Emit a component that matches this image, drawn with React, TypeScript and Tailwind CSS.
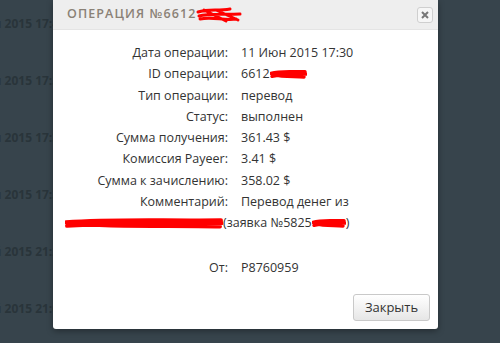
const rows: [string, string][] = [
  ["Дата операции:", "11 Июн 2015 17:30"],
  ["ID операции:", "6612"],
  ["Тип операции:", "перевод"],
  ["Статус:", "выполнен"],
  ["Сумма получения:", "361.43 $"],
  ["Комиссия Payeer:", "3.41 $"],
  ["Сумма к зачислению:", "358.02 $"],
  ["Комментарий:", "Перевод денег из"],
];

const bgRows = [
  "11 Июн 2015 17:45",
  "11 Июн 2015 17:39",
  "11 Июн 2015 17:35",
  "11 Июн 2015 17:31",
  "10 Май 2015 21:25",
  "10 Май 2015 21:02",
];

const Scribble = ({ w, h }: { w: number; h: number }) => (
  <svg width={w} height={h} viewBox={`0 0 ${w} ${h}`} className="inline-block align-middle">
    <path
      d={`M1 ${h * 0.45} C ${w * 0.3} ${h * 0.2}, ${w * 0.6} ${h * 0.35}, ${w - 2} ${h * 0.3}
         M2 ${h * 0.7} C ${w * 0.35} ${h * 0.5}, ${w * 0.7} ${h * 0.55}, ${w - 1} ${h * 0.5}
         M3 ${h * 0.55} C ${w * 0.4} ${h * 0.8}, ${w * 0.7} ${h * 0.65}, ${w - 3} ${h * 0.75}`}
      stroke="#ff0000"
      strokeWidth={h * 0.28}
      strokeLinecap="round"
      fill="none"
    />
  </svg>
);

export default function App() {
  return (
    <div className="relative w-[500px] h-[343px] overflow-hidden bg-[#37444c] font-['Open_Sans',sans-serif]">
      {/* background list, mostly hidden by the modal */}
      <div className="flex flex-col pt-[14px]">
        {bgRows.map((r) => (
          <div key={r} className="h-[57px] w-[66px] flex justify-end">
            <span className="shrink-0 whitespace-nowrap text-[12px] font-bold text-[#29343a] leading-[20px]">{r}</span>
          </div>
        ))}
      </div>

      {/* modal */}
      <div className="absolute left-[53px] top-0 w-[385px] h-[329px] bg-white rounded-b-[3px] shadow-[0_2px_6px_rgba(0,0,0,0.35)] flex flex-col">
        <div className="h-[30px] bg-[#eeeeee] flex items-center justify-between pl-[14px] pr-[5px] border-b border-[#e4e4e4]">
          <div className="flex items-center">
            <span className="text-[12.5px] font-semibold tracking-[1.1px] text-[#8a8176]">ОПЕРАЦИЯ №6612</span>
            <svg width="48" height="18" viewBox="0 0 48 18" className="-ml-[1px]">
              <path d="M2 6 C12 3, 22 5, 34 3 M3 10 C14 7, 26 9, 44 8 M4 13 C16 10, 28 15, 40 13 M8 4 L30 15 M20 4 L42 14" stroke="#ff0000" strokeWidth="3" strokeLinecap="round" fill="none" />
            </svg>
          </div>
          <button className="w-[16px] h-[16px] rounded-[3px] border border-[#cfcfcf] bg-[#f6f6f6] flex items-center justify-center">
            <svg width="8" height="8" viewBox="0 0 8 8">
              <path d="M1 1 L7 7 M7 1 L1 7" stroke="#777" strokeWidth="2" />
            </svg>
          </button>
        </div>

        <div className="pt-[12px] text-[12.5px] text-[#333] leading-[21.25px]">
          <div className="grid grid-cols-[175px_1fr] gap-x-[13px]">
            {rows.map(([k, v]) => (
              <div key={k} className="contents">
                <div className="text-right whitespace-nowrap">{k}</div>
                <div className="whitespace-nowrap flex items-center">
                  {v}
                  {k === "ID операции:" && <Scribble w={37} h={12} />}
                </div>
              </div>
            ))}
          </div>
          <div className="pl-[12px] flex items-center whitespace-nowrap">
            <Scribble w={158} h={14} />
            <span>(заявка №5825</span>
            <Scribble w={34} h={12} />
            <span>)</span>
          </div>
          <div className="h-[21.25px]" />
          <div className="grid grid-cols-[175px_1fr] gap-x-[13px] mt-[2px]">
            <div className="text-right">От:</div>
            <div>P8760959</div>
          </div>
        </div>

        <div className="mt-auto flex justify-end pr-[8px] pb-[8px]">
          <button className="w-[77px] h-[27px] rounded-[3px] border border-[#c9c9c9] bg-gradient-to-b from-white to-[#e6e6e6] text-[13px] text-[#333]">
            Закрыть
          </button>
        </div>
      </div>
    </div>
  );
}
